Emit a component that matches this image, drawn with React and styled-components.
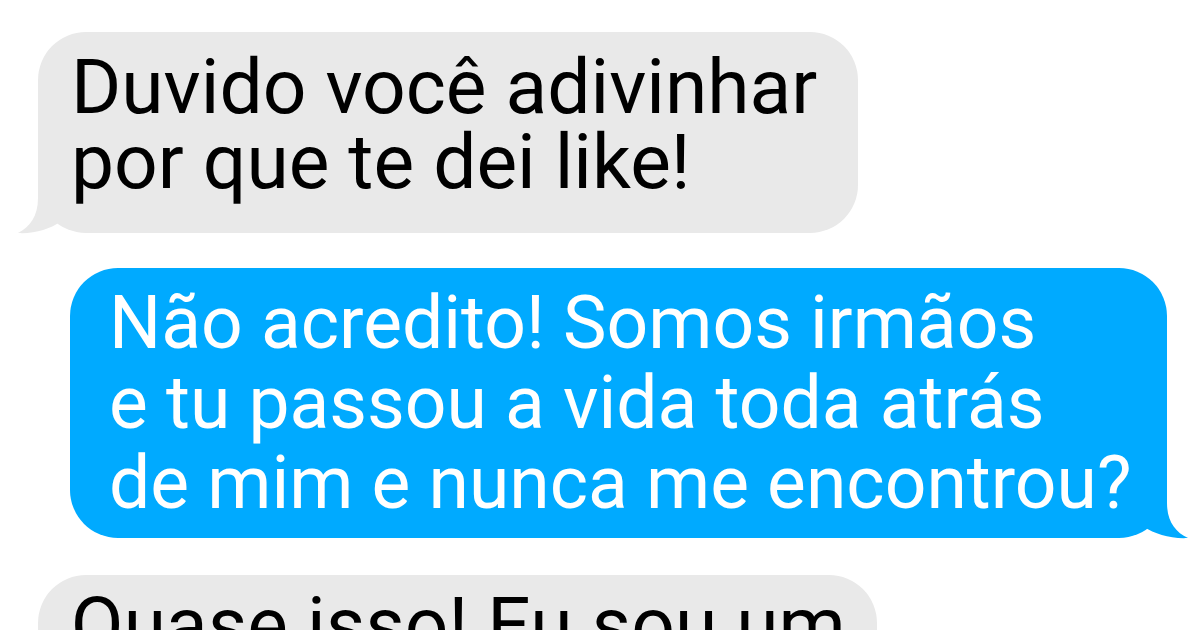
import React from "react";
import styled, { createGlobalStyle } from "styled-components";

const GlobalStyle = createGlobalStyle`
  html, body {
    margin: 0;
    padding: 0;
    background: #fff;
    width: 1200px;
    height: 630px;
    overflow: hidden;
  }
`;

const Chat = styled.div`
  display: flex;
  flex-direction: column;
  width: 1200px;
  height: 630px;
  overflow: hidden;
  font-family: Roboto, "Liberation Sans", sans-serif;
`;

const Bubble = styled.div`
  position: relative;
  box-sizing: border-box;
  width: ${({ w }) => w}px;
  margin-top: ${({ top }) => top}px;
  margin-left: ${({ left }) => left}px;
  padding: ${({ pad }) => pad};
  border-radius: 48px;
  background: ${({ sent }) => (sent ? "#00aaff" : "#e9e9e9")};
  color: ${({ sent }) => (sent ? "#fff" : "#000")};
  font-size: ${({ sent }) => (sent ? 73.2 : 76.7)}px;
  line-height: ${({ sent }) => (sent ? 80 : 75)}px;
  white-space: nowrap;
  flex-shrink: 0;
`;

const Text = styled.span`
  position: relative;
  z-index: 1;
`;

const Tail = styled.svg`
  position: absolute;
  bottom: 0;
  ${({ side }) => (side === "right" ? "right: -21px;" : "left: -21px;")}
  width: 84px;
  height: 52px;
  overflow: visible;
`;

const LeftTail = ({ color }) => (
  <Tail side="left" viewBox="0 0 84 52">
    <path
      d="M21 2 L21 17 C21 35 13 46 1 52 C17 53 33 48 43 41 C53 47 63 50 83 50 L83 2 Z"
      fill={color}
    />
  </Tail>
);

const RightTail = ({ color }) => (
  <Tail side="right" viewBox="0 0 84 52">
    <path
      d="M63 2 L63 17 C63 35 71 46 84 52 C67 53 51 48 40 41 C31 47 21 50 1 50 L1 2 Z"
      fill={color}
    />
  </Tail>
);

const App = () => (
  <>
    <GlobalStyle />
    <Chat>
      <Bubble w={820} top={32} left={38} pad="18px 33px 33px">
        <Text>
          Duvido você adivinhar
          <br />
          por que te dei like!
        </Text>
        <LeftTail color="#e9e9e9" />
      </Bubble>
      <Bubble sent w={1097} top={35} left={70} pad="15px 39px">
        <Text>
          Não acredito! Somos irmãos
          <br />e tu passou a vida toda atrás
          <br />
          de mim e nunca me encontrou?
        </Text>
        <RightTail color="#00aaff" />
      </Bubble>
      <Bubble w={839} top={37} left={38} pad="13px 33px 32px">
        <Text>Quase isso! Eu sou um</Text>
      </Bubble>
    </Chat>
  </>
);

export default App;
